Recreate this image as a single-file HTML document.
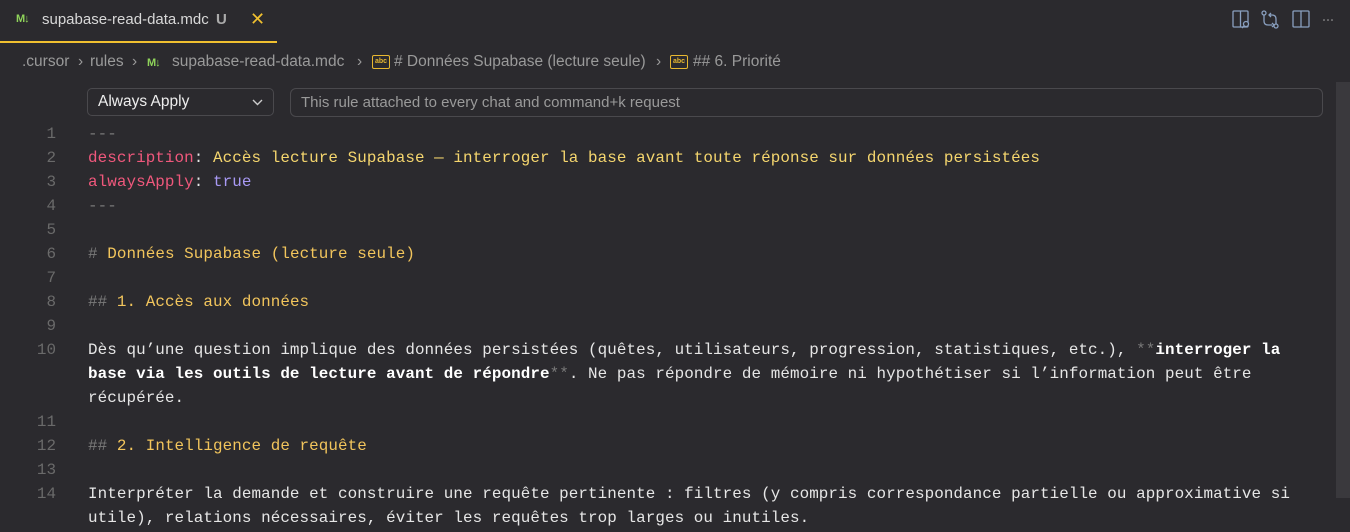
<!DOCTYPE html>
<html><head><meta charset="utf-8"><style>
*{margin:0;padding:0;box-sizing:border-box}
body{width:1350px;height:532px;background:#2b2a2e;overflow:hidden;position:relative;font-family:"Liberation Sans",sans-serif;color:#ccc}
.tab{position:absolute;left:0;top:0;width:277px;height:43px;border-bottom:2px solid #f0c030}
.tabt{position:absolute;left:42px;top:11px;font-size:15px;color:#d8d8d8}
.md{position:absolute;font:bold 11px "Liberation Sans",sans-serif;color:#8fd35a;letter-spacing:-1px}
.bc{position:absolute;top:53px;font-size:15.5px;color:#9a9a9a;white-space:nowrap}
.abc{position:absolute;top:55px;width:18px;height:14px;border:1.5px solid #e8b830;border-radius:2px;font:bold 7px/11px sans-serif;color:#e8b830;text-align:center}
.sel{position:absolute;left:87px;top:88px;width:187px;height:28px;border:1px solid #4a494d;border-radius:5px;color:#eee;font-size:15.5px;padding:4px 10px}
.inp{position:absolute;left:290px;top:88px;width:1033px;height:29px;border:1px solid #4a494d;border-radius:6px;color:#9a9a9a;font-size:15px;padding:5px 10px}
.ln{position:absolute;left:0;width:56px;text-align:right;font:15.9px/24px "Liberation Mono",monospace;color:#6a6a6a}
.code{position:absolute;left:88px;top:122px;width:1225px;font:15.9px/24px "Liberation Mono",monospace;letter-spacing:0.08px;color:#e6e6e6;white-space:pre}
.k{color:#f0587c}.s{color:#f5d66e}.p{color:#a99af5}.g{color:#7a7a7a}.h{color:#f2c55c}.b{font-weight:bold;color:#fff}
.sb{position:absolute;left:1336px;top:82px;width:14px;height:416px;background:#3a393d}
</style></head><body>
<div class="tab"><span class="md" style="left:16px;top:13px">M↓</span><span class="tabt">supabase-read-data.mdc <b style="color:#aaa;font-weight:bold;margin-left:3px">U</b></span><span style="position:absolute;left:250px;top:9px;color:#f0c030;font-size:18px">✕</span></div>
<svg style="position:absolute;left:1232px;top:10px" width="110" height="22" viewBox="0 0 110 22" fill="none" stroke="#8aa0c0" stroke-width="1.3">
<rect x="1" y="1" width="15" height="16" rx="1"/><line x1="8.5" y1="1" x2="8.5" y2="17"/><circle cx="14" cy="14" r="2.5" fill="#2b2a2e"/><line x1="12" y1="16" x2="10" y2="18"/>
<circle cx="32" cy="3" r="2"/><circle cx="44" cy="16" r="2"/><path d="M32 5v6q0 4 4 4h4M40 13l2 2-2 2M44 14V9q0-4-4-4h-3M39 3l-2 2 2 2"/>
<rect x="61" y="1" width="16" height="16" rx="1"/><line x1="69" y1="1" x2="69" y2="17"/>
<circle cx="92" cy="10" r=".8" fill="#aaa" stroke="none"/><circle cx="96" cy="10" r=".8" fill="#aaa" stroke="none"/><circle cx="100" cy="10" r=".8" fill="#aaa" stroke="none"/></svg>
<span class="bc" style="left:22px">.cursor</span><span class="bc" style="left:78px">›</span>
<span class="bc" style="left:90px">rules</span><span class="bc" style="left:132px">›</span>
<span class="md" style="left:147px;top:57px">M↓</span>
<span class="bc" style="left:172px">supabase-read-data.mdc</span><span class="bc" style="left:357px">›</span>
<span class="abc" style="left:372px">abc</span>
<span class="bc" style="left:394px"># Données Supabase (lecture seule)</span><span class="bc" style="left:656px">›</span>
<span class="abc" style="left:670px">abc</span>
<span class="bc" style="left:693px">## 6. Priorité</span>
<div class="sel">Always Apply<svg style="position:absolute;right:10px;top:10px" width="11" height="7"><path d="M1 1l4.5 4.5L10 1" stroke="#ccc" stroke-width="1.4" fill="none"/></svg></div>
<div class="inp">This rule attached to every chat and command+k request</div>
<div class="ln" style="top:122px">1<br>2<br>3<br>4<br>5<br>6<br>7<br>8<br>9<br>10<br><br><br>11<br>12<br>13<br>14</div>
<div class="code"><span class="g">---</span>
<span class="k">description</span>: <span class="s">Accès lecture Supabase — interroger la base avant toute réponse sur données persistées</span>
<span class="k">alwaysApply</span>: <span class="p">true</span>
<span class="g">---</span>

<span class="g">#</span> <span class="h">Données Supabase (lecture seule)</span>

<span class="g">##</span> <span class="h">1. Accès aux données</span>

Dès qu’une question implique des données persistées (quêtes, utilisateurs, progression, statistiques, etc.), <span class="g">**</span><span class="b">interroger la</span>
<span class="b">base via les outils de lecture avant de répondre</span><span class="g">**</span>. Ne pas répondre de mémoire ni hypothétiser si l’information peut être
récupérée.

<span class="g">##</span> <span class="h">2. Intelligence de requête</span>

Interpréter la demande et construire une requête pertinente : filtres (y compris correspondance partielle ou approximative si
utile), relations nécessaires, éviter les requêtes trop larges ou inutiles.</div>
<div class="sb"></div>
</body></html>
